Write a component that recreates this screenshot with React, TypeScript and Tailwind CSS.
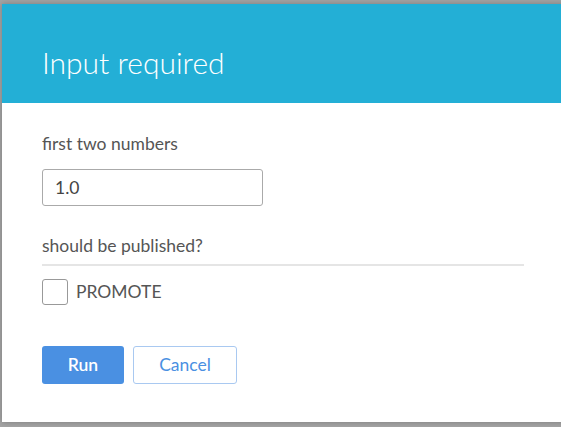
export default function App() {
  return (
    <div className="relative h-[427px] w-[561px] overflow-hidden bg-[#a4a4a4] font-['Lato','Liberation_Sans',sans-serif] text-[#555]">
      <div className="flex flex-col pl-[2px] pt-[4px]">
        <div className="h-[418px] w-[620px] bg-white shadow-[0_0_6px_rgba(0,0,0,0.25)]">
          <div className="h-[99px] bg-[#23afd6] pl-10 pt-[40px]">
            <h1 className="text-[30px] font-light leading-9 text-white">
              Input required
            </h1>
          </div>

          <div className="w-[522px] pl-10 pt-[29px]">
            <label className="block text-[17.5px] leading-6">first two numbers</label>
            <input
              type="text"
              defaultValue="1.0"
              className="mt-[13px] h-[37px] w-[221px] rounded-[3px] border border-[#aaa] px-3 text-[17.5px] text-[#444] outline-none"
            />

            <p className="mt-[28px] text-[17.5px] leading-6">should be published?</p>
            <div className="mt-[6px] h-[2px] bg-[#e5e5e5]" />

            <label className="mt-[13px] flex items-center gap-2">
              <span className="h-[26px] w-[26px] rounded-[3px] border border-[#999] bg-white" />
              <span className="text-[17.5px] uppercase">Promote</span>
            </label>

            <div className="mt-[41px] flex gap-[9px]">
              <button className="h-[38px] w-[82px] rounded-[3px] bg-[#4a90e2] text-[17.5px] font-semibold text-white">
                Run
              </button>
              <button className="h-[38px] w-[104px] rounded-[3px] border border-[#a9c9f1] bg-white text-[17.5px] text-[#4a90e2]">
                Cancel
              </button>
            </div>
          </div>
        </div>

        <div className="flex pt-[2px] text-[15px] leading-5 text-[#262626]">
          <span className="ml-[207px]">Updat</span>
          <span className="ml-[60px]">1m 6s</span>
          <span className="ml-[122px]">4 hours ago</span>
        </div>
      </div>
    </div>
  );
}
